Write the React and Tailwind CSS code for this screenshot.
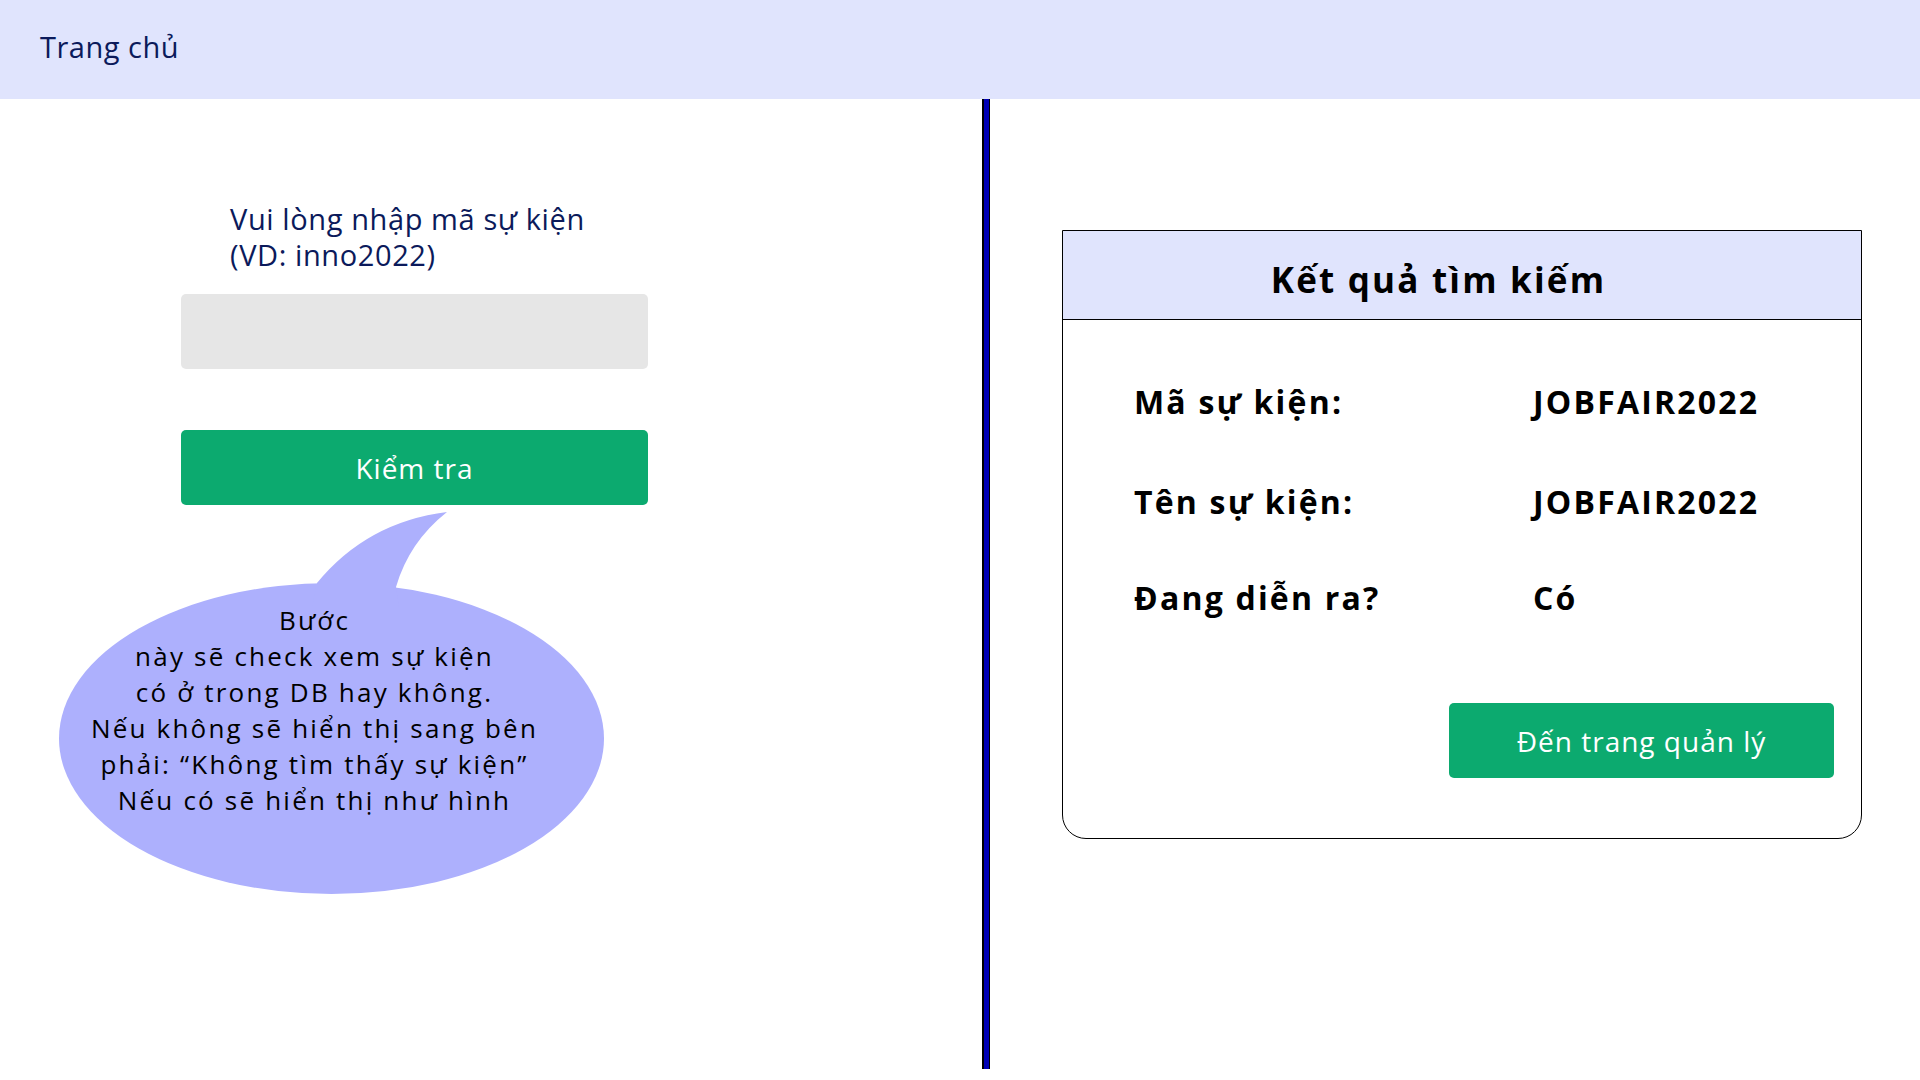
import React from 'react';

const rows = [
    { label: 'Mã sự kiện:', value: 'JOBFAIR2022', gap: 'mt-0' },
    { label: 'Tên sự kiện:', value: 'JOBFAIR2022', gap: 'mt-[60px]' },
    { label: 'Đang diễn ra?', value: 'Có', gap: 'mt-[56px]' },
];

function SpeechBubble() {
    return (
        <div className="relative ml-[57px] mt-[7px] w-[549px] h-[384px]">
            {/* bubble drawing */}
            <svg className="absolute inset-0" width="549" height="384" viewBox="0 0 549 384">
                <ellipse cx="274.5" cy="226.5" rx="272.5" ry="155.5" fill="#adb0fd" />
                <path d="M255 95 L260 71 Q310 10 390 0 Q352 30 339 75 L342 95 Z" fill="#adb0fd" />
            </svg>
            <div className="relative pt-[90px] pr-[34px] text-center text-[26px] leading-[36px] tracking-[2.2px] text-black">
                <p>Bước</p>
                <p>này sẽ check xem sự kiện</p>
                <p>có ở trong DB hay không.</p>
                <p>Nếu không sẽ hiển thị sang bên</p>
                <p>phải: “Không tìm thấy sự kiện”</p>
                <p>Nếu có sẽ hiển thị như hình</p>
            </div>
        </div>
    );
}

export default function App() {
    return (
        <div className="w-[1920px] h-[1080px] bg-white flex flex-col font-['Open_Sans',sans-serif] overflow-hidden">
            {/* Top bar */}
            <header className="h-[99px] shrink-0 bg-[#e0e4fd] flex items-center pl-[40px] pb-[6px]">
                <span className="text-[29px] tracking-[0.5px] text-[#0b1a5b]">Trang chủ</span>
            </header>

            <div className="flex flex-1">
                {/* Left: lookup form */}
                <div className="w-[982px] shrink-0 flex flex-col">
                    <div className="ml-[230px] mt-[102px] text-[29px] leading-[36px] tracking-[0.6px] text-[#0b1a5b]">
                        <p>Vui lòng nhập mã sự kiện</p>
                        <p>(VD: inno2022)</p>
                    </div>
                    <input
                        type="text"
                        className="ml-[181px] mt-[21px] w-[467px] h-[75px] bg-[#e6e6e6] rounded-[5px] outline-none px-4 text-[24px]"
                    />
                    <button className="ml-[181px] mt-[61px] w-[467px] h-[75px] bg-[#0caa6f] rounded-[5px] text-white text-[28px] tracking-[1px]">
                        Kiểm tra
                    </button>
                    <SpeechBubble />
                </div>

                {/* Divider */}
                <div className="w-[8px] h-[970px] shrink-0 bg-[#0000b5] border-l-2 border-r border-black" />

                {/* Right: result card */}
                <div className="flex-1">
                    <div className="ml-[72px] mt-[131px] w-[800px] border border-black rounded-b-[24px] bg-white">
                        <div className="h-[89px] bg-[#e0e4fd] border-b border-black flex justify-center pr-[47px] pt-[29px]">
                            <h2 className="text-[35px] leading-[40px] font-bold tracking-[2.2px] text-black">Kết quả tìm kiếm</h2>
                        </div>
                        <div className="pl-[71px] pt-[62px] flex flex-col">
                            {rows.map(row => (
                                <div key={row.label} className={`${row.gap} grid grid-cols-[399px_1fr] text-[32px] leading-[40px] font-bold tracking-[2.2px] text-black`}>
                                    <span>{row.label}</span>
                                    <span>{row.value}</span>
                                </div>
                            ))}
                        </div>
                        <div className="flex justify-end pr-[27px] pt-[85px] pb-[60px]">
                            <button className="w-[385px] h-[75px] bg-[#0caa6f] rounded-[5px] text-white text-[28px] tracking-[1px]">
                                Đến trang quản lý
                            </button>
                        </div>
                    </div>
                </div>
            </div>
        </div>
    );
}
